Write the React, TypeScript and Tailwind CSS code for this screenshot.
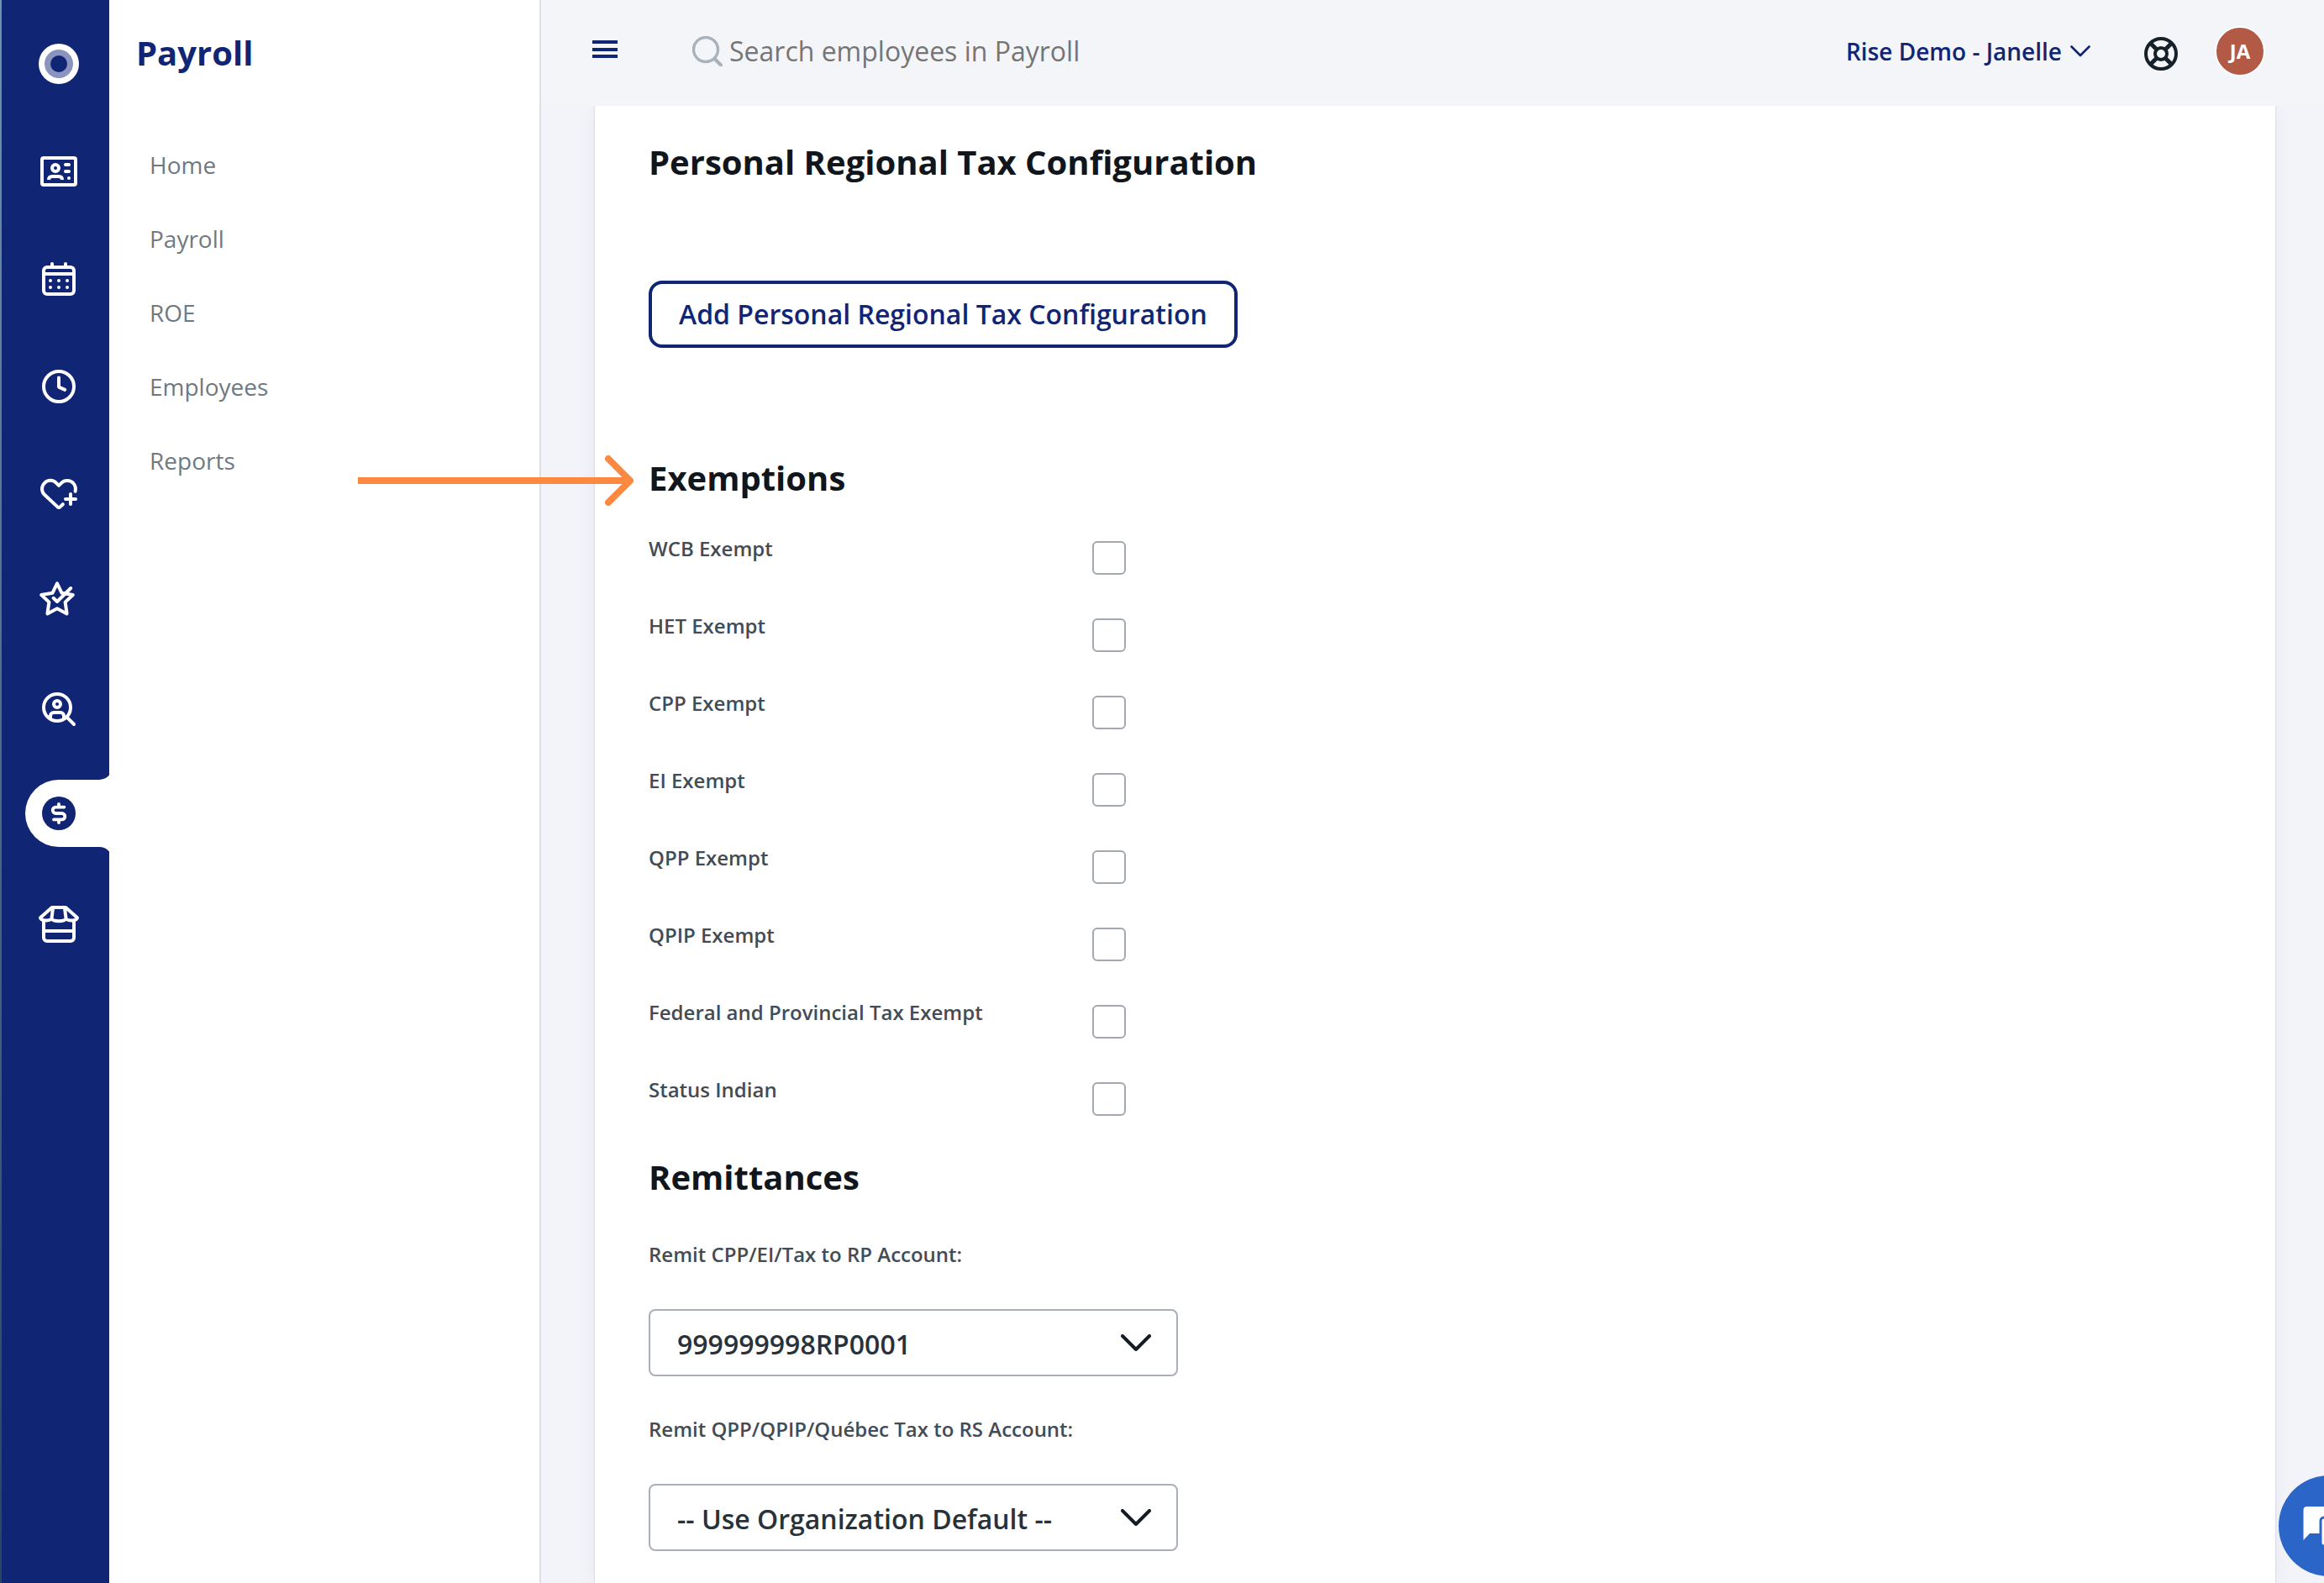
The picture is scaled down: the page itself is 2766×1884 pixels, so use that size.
import type { ReactNode } from 'react';

const menu = ['Home', 'Payroll', 'ROE', 'Employees', 'Reports'];

const exemptions = [
  'WCB Exempt',
  'HET Exempt',
  'CPP Exempt',
  'EI Exempt',
  'QPP Exempt',
  'QPIP Exempt',
  'Federal and Provincial Tax Exempt',
  'Status Indian',
];

const remittances = [
  { id: 'rp-account', label: 'Remit CPP/EI/Tax to RP Account:', value: '999999998RP0001' },
  { id: 'rs-account', label: 'Remit QPP/QPIP/Québec Tax to RS Account:', value: '-- Use Organization Default --' },
];

function Icon({ children }: { children: ReactNode }) {
  return (
    <svg
      viewBox="0 0 24 24"
      className="relative size-12 overflow-visible"
      fill="none"
      stroke="currentColor"
      strokeWidth="2"
      strokeLinecap="round"
      strokeLinejoin="round"
      aria-hidden="true"
    >
      {children}
    </svg>
  );
}

const railIcons: { name: string; icon: ReactNode }[] = [
  {
    name: 'Rise',
    icon: (
      <Icon>
        <circle cx="12" cy="12" r="12" fill="#ffffff" stroke="none" />
        <circle cx="12" cy="12" r="8.5" fill="#8a94bf" stroke="none" />
        <circle cx="12" cy="12" r="5" fill="#112575" stroke="none" />
      </Icon>
    ),
  },
  {
    name: 'People',
    icon: (
      <Icon>
        <rect x="2" y="4" width="20" height="16" rx="1" />
        <circle cx="10" cy="10" r="2" />
        <path d="M6 17c0-1.4.9-2 2-2h4c1.1 0 2 .6 2 2" strokeLinecap="butt" />
        <path d="M16 8h2M16 12h2M18 16h.01" />
      </Icon>
    ),
  },
  {
    name: 'Calendar',
    icon: (
      <Icon>
        <rect x="3" y="5" width="18" height="16" rx="2" />
        <path d="M3 9h18M8 3v2M16 3v2" />
        <path d="M7 13h.01M12 13h.01M17 13h.01M7 17h.01M12 17h.01M17 17h.01" />
      </Icon>
    ),
  },
  {
    name: 'Time',
    icon: (
      <Icon>
        <circle cx="12" cy="12" r="9" />
        <path d="M12 6.7v5.6l3.6 1.6" />
      </Icon>
    ),
  },
  {
    name: 'Benefits',
    icon: (
      <Icon>
        <path d="M21.8 10.4C22.6 7 20.3 4 17 4c-1.4 0-2.6.5-3.5 1.4L12 6.9l-1.500-1.500a4.900 4.900 0 0 0-7 0c-2 2-2 5.100.1 7.100l7.700 7.200q.7.600 1.400 0l1.700-1.600" />
        <path d="M16 15h6M19 12v6" />
      </Icon>
    ),
  },
  {
    name: 'Performance',
    icon: (
      <Icon>
        <path d="M11 1.200l2.800 5.700 6.600 1.100-4.600 4.300 1 6.900L11 16.100 5.200 19.200l1-6.900L1.600 8l6.600-1.100z" />
        <path d="M8.800 9.900L11 12l8.100-8" />
      </Icon>
    ),
  },
  {
    name: 'Recruiting',
    icon: (
      <Icon>
        <circle cx="11" cy="11" r="8" />
        <circle cx="11" cy="9" r="2" />
        <path d="M7 17.500V16a2 2 0 0 1 2-2h4a2 2 0 0 1 2 2v1.500M16.800 16.800l4.200 4.200" />
      </Icon>
    ),
  },
  {
    name: 'Payroll',
    icon: (
      <Icon>
        <circle cx="12" cy="12" r="10" fill="#112575" stroke="none" />
        <path
          d="M15.200 8.300h-5a1.850 1.850 0 0 0 0 3.700h3.600a1.850 1.850 0 0 1 0 3.700H9M12 6.500v1.800M12 15.700v1.800"
          stroke="#ffffff"
          strokeWidth="1.900"
        />
      </Icon>
    ),
  },
  {
    name: 'Marketplace',
    icon: (
      <Icon>
        <path d="M3 10v10a2 2 0 0 0 2 2h14a2 2 0 0 0 2-2V10M3 16h18" />
        <path d="M7.900 2h8.200L23 8.100A3.600 1.900 0 0 1 16.300 8.800 4.400 1.700 0 0 1 7.700 8.800 3.600 1.900 0 0 1 1 8.100zM8.500 2.500l-.8 6.300M15.500 2.500l.8 6.300" />
      </Icon>
    ),
  },
];

function Rail() {
  return (
    <nav aria-label="Modules" className="flex w-32 shrink-0 flex-col bg-[#112575] pt-3 pl-2 text-white">
      {railIcons.map(({ name, icon }) =>
        name === 'Payroll' ? (
          <a key={name} href="#payroll" aria-label={name} aria-current="page" className="relative flex h-32 items-center justify-center pb-2">
            <svg viewBox="0 0 100 96" className="absolute top-3 right-0 h-24 w-[100px]" fill="#ffffff" aria-hidden="true">
              <path d="M100 2.600A16 16 0 0 1 88 8H40a40 40 0 0 0 0 80h48a16 16 0 0 1 12 5.400z" />
            </svg>
            {icon}
          </a>
        ) : (
          <a key={name} href={'#' + name.toLowerCase()} aria-label={name} className="flex h-32 items-center justify-center">
            {icon}
          </a>
        ),
      )}
    </nav>
  );
}

function SideMenu() {
  return (
    <aside className="w-[514px] shrink-0 border-r-2 border-[#e0e0e1] bg-white pt-[34px] pl-8">
      <h1 className="text-[40px] leading-[58px] font-bold text-[#112575]">Payroll</h1>
      <ul className="mt-[60px] pl-4">
        {menu.map((item) => (
          <li key={item} className="flex h-[88px] items-center">
            <a href={'#' + item.toLowerCase()} className="text-[28px] leading-10 text-[#6f7982]">
              {item}
            </a>
          </li>
        ))}
      </ul>
    </aside>
  );
}

function TopBar() {
  return (
    <header className="relative z-10 flex h-[126px] items-center bg-[#f4f5f9] pr-[70px] pb-1 pl-[61px]">
      <button type="button" aria-label="Toggle menu" className="mb-1">
        <svg viewBox="0 0 30 22" className="h-[22px] w-[30px]" fill="#112575" aria-hidden="true">
          <path d="M0 0h30v4H0zM0 9h30v4H0zM0 17h30v4H0z" />
        </svg>
      </button>
      <label className="ml-[89px] flex flex-1 items-center gap-2">
        <svg viewBox="0 0 36 36" className="size-9" fill="none" stroke="#a9b2bb" strokeLinecap="round" aria-hidden="true">
          <circle cx="16" cy="16" r="14.500" strokeWidth="3.400" />
          <path d="M27 27.500l7 7" strokeWidth="4" />
        </svg>
        <input
          type="search"
          aria-label="Search employees in Payroll"
          placeholder="Search employees in Payroll"
          className="w-full max-w-[800px] bg-transparent text-[32px] leading-10 outline-none placeholder:text-[#757575]"
        />
      </label>
      <button type="button" className="flex items-center gap-2.5 text-[28px] leading-10 font-semibold text-[#112575]">
        Rise Demo - Janelle
        <svg viewBox="0 0 24 14" className="h-3.5 w-6" fill="none" stroke="currentColor" strokeWidth="2.600" strokeLinecap="round" strokeLinejoin="round" aria-hidden="true">
          <path d="M1.500 1.500L12 12 22.500 1.500" />
        </svg>
      </button>
      <button type="button" aria-label="Help" className="mt-1.5 ml-16 text-[#17212a]">
        <svg viewBox="0 0 40 40" className="size-10" fill="none" stroke="currentColor" strokeWidth="4" aria-hidden="true">
          <circle cx="20" cy="20" r="18" />
          <circle cx="20" cy="20" r="7" />
          <path d="M7.500 7.500l7.500 7.500M32.500 7.500L25 15M7.500 32.500L15 25M32.500 32.500L25 25" strokeWidth="5" />
        </svg>
      </button>
      <button
        type="button"
        aria-label="Account JA"
        className="ml-11 flex size-[60px] items-center justify-center rounded-full border-2 border-white bg-[#b35a47] text-2xl font-bold text-white"
      >
        JA
      </button>
    </header>
  );
}

function Select({ id, value }: { id: string; value: string }) {
  return (
    <div className="relative w-[630px]">
      <select
        id={id}
        defaultValue={value}
        className="h-20 w-full appearance-none rounded-lg border-2 border-[#aab0bb] bg-white px-8 pt-1 text-[32px] font-semibold text-[#29323a]"
      >
        <option>{value}</option>
      </select>
      <svg viewBox="0 0 36 20" className="pointer-events-none absolute top-[30px] right-8 h-5 w-9" fill="none" stroke="#141d26" strokeWidth="4" strokeLinecap="round" strokeLinejoin="round" aria-hidden="true">
        <path d="M2 2l16 16L34 2" />
      </svg>
    </div>
  );
}

export default function App() {
  return (
    <div className="relative flex min-h-screen overflow-hidden bg-[#f3f4f9] font-['Open_Sans',sans-serif]">
      <div className="w-0.5 shrink-0 bg-linear-to-b from-[#6f93ad] via-[#4a6a86] to-[#2b4560]" />
      <Rail />
      <SideMenu />
      <div className="flex min-w-0 flex-1 flex-col">
        <TopBar />
        <main className="mr-[58px] ml-16 flex-1 bg-white px-16 pt-[38px] pb-[38px] shadow-[0_0_2px_rgba(17,37,117,0.25),0_4px_24px_rgba(17,37,117,0.05)]">
          <section>
            <h2 className="text-[40px] leading-[58px] font-bold text-[#10161b]">Personal Regional Tax Configuration</h2>
            <button type="button" className="mt-28 h-20 rounded-2xl border-4 border-[#112575] px-8 text-[32px] leading-10 font-semibold text-[#112575]">
              Add Personal Regional Tax Configuration
            </button>
          </section>

          <section className="mt-[126px]">
            <h2 className="text-[40px] leading-[58px] font-bold text-[#10161b]">Exemptions</h2>
            <div className="mt-[38px]">
              {exemptions.map((name) => (
                <label key={name} className="flex h-[92px] items-start text-2xl leading-[34px] font-semibold text-[#434c55]">
                  <span className="w-[528px]">{name}</span>
                  <input type="checkbox" className="mt-2 size-10 appearance-none rounded-md border-2 border-[#a3a8b1] bg-white" />
                </label>
              ))}
            </div>
          </section>

          <section>
            <h2 className="text-[40px] leading-[58px] font-bold text-[#10161b]">Remittances</h2>
            <div className="mt-[46px] flex flex-col gap-[46px]">
              {remittances.map(({ id, label, value }) => (
                <div key={id} className="flex flex-col gap-12">
                  <label htmlFor={id} className="text-2xl leading-[34px] font-semibold text-[#434c55]">
                    {label}
                  </label>
                  <Select id={id} value={value} />
                </div>
              ))}
            </div>
          </section>
        </main>
      </div>

      {/* Callout pointing at the Exemptions heading */}
      <svg viewBox="0 0 330 60" className="pointer-events-none absolute top-[542px] left-[426px] z-20 h-[60px] w-[330px]" fill="none" stroke="#fd8840" strokeWidth="8" strokeLinejoin="round" aria-hidden="true">
        <path d="M0 30h322" />
        <path d="M298 4l26 26-26 26" strokeLinecap="round" />
      </svg>

      {/* Chat launcher docked against the window edge */}
      <button type="button" aria-label="Open chat" className="absolute -right-[66px] bottom-2 z-20 size-[120px] rounded-full bg-[#2a65c7]">
        <svg viewBox="0 0 120 120" className="size-full" aria-hidden="true">
          <path d="M33 37h42a4 4 0 0 1 4 4v28H37l-7.500 8V41a4 4 0 0 1 3.500-4z" fill="#ffffff" />
          <path d="M54 50h34a4 4 0 0 1 4 4v38l-8-8H54a4 4 0 0 1-4-4V54a4 4 0 0 1 4-4z" fill="#ffffff" stroke="#2a65c7" strokeWidth="3" />
        </svg>
      </button>
    </div>
  );
}
